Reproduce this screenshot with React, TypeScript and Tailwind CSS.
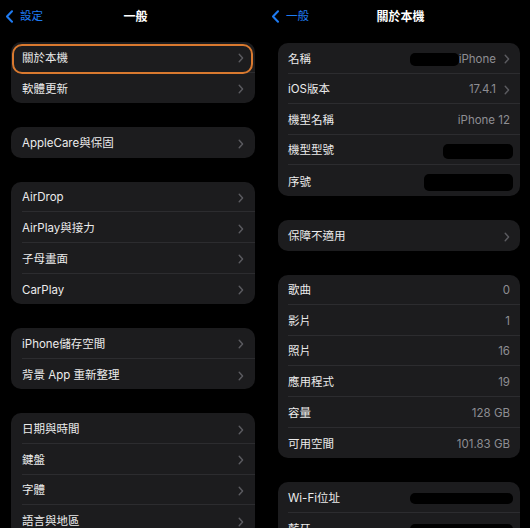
import React from "react";

type Row = {
  label: string;
  value?: string;
  chevron?: boolean;
  bar?: { w: number; h: number };
  ring?: boolean;
};

const font = {
  fontFamily: '"Inter", "Noto Sans CJK TC", "Noto Sans", sans-serif',
};

const Chevron = () => (
  <svg width="6" height="10" viewBox="0 0 6 10" className="shrink-0">
    <path
      d="M1.2 1.2L4.6 5L1.2 8.8"
      stroke="#5b5b60"
      strokeWidth="1.4"
      fill="none"
      strokeLinecap="round"
      strokeLinejoin="round"
    />
  </svg>
);

const BackChevron = () => (
  <svg width="9" height="13" viewBox="0 0 9 13" className="shrink-0">
    <path
      d="M7 1.2L2 6.5L7 11.8"
      stroke="#1f7bf2"
      strokeWidth="2"
      fill="none"
      strokeLinecap="round"
      strokeLinejoin="round"
    />
  </svg>
);

const Header = ({ back, title }: { back: string; title: string }) => (
  <div className="flex h-[32px] items-center pt-[1px]">
    <div className="flex flex-1 items-center gap-[6px] pl-[5px]">
      <BackChevron />
      <span className="text-[11.5px] text-[#1f7bf2]">{back}</span>
    </div>
    <span className="text-[12px] font-semibold text-white">{title}</span>
    <div className="flex-1" />
  </div>
);

const Group = ({ rows, right }: { rows: Row[]; right?: boolean }) => (
  <div
    className={`rounded-[10px] bg-[#1c1c1e] ${
      right ? "ml-[12px] mr-[10px]" : "ml-[11px] mr-[11px]"
    }`}
  >
    {rows.map((r, i) => (
      <div
        key={r.label}
        className={`relative h-[30.6px] ${right ? "pl-[10px]" : "pl-[11px]"}`}
      >
        {r.ring && (
          <div className="absolute -bottom-[1px] left-[1px] right-[2px] top-[2px] rounded-[10px] border-2 border-[#d9792f]" />
        )}
        <div
          className={`flex h-full items-center gap-[8px] pt-[3px] ${
            right ? "pr-[10px]" : "pr-[11px]"
          } ${i < rows.length - 1 ? "border-b border-[#2c2c2f]" : ""}`}
        >
          <span className="text-[11.5px] text-[#ebebeb]">{r.label}</span>
          <div className="flex flex-1 items-center justify-end">
            {r.bar && (
              <div
                className={`rounded-[5px] bg-black ${r.value ? "" : "-mr-[3px]"}`}
                style={{ width: r.bar.w, height: r.bar.h }}
              />
            )}
            {r.value && (
              <span className="text-[11.5px] text-[#8e8e93]">{r.value}</span>
            )}
          </div>
          {r.chevron && <Chevron />}
        </div>
      </div>
    ))}
  </div>
);

const leftGroups: Row[][] = [
  [
    { label: "關於本機", chevron: true, ring: true },
    { label: "軟體更新", chevron: true },
  ],
  [{ label: "AppleCare與保固", chevron: true }],
  [
    { label: "AirDrop", chevron: true },
    { label: "AirPlay與接力", chevron: true },
    { label: "子母畫面", chevron: true },
    { label: "CarPlay", chevron: true },
  ],
  [
    { label: "iPhone儲存空間", chevron: true },
    { label: "背景 App 重新整理", chevron: true },
  ],
  [
    { label: "日期與時間", chevron: true },
    { label: "鍵盤", chevron: true },
    { label: "字體", chevron: true },
    { label: "語言與地區", chevron: true },
  ],
];

const rightGroups: Row[][] = [
  [
    { label: "名稱", value: "iPhone", chevron: true, bar: { w: 49, h: 13 } },
    { label: "iOS版本", value: "17.4.1", chevron: true },
    { label: "機型名稱", value: "iPhone 12" },
    { label: "機型型號", bar: { w: 70, h: 15 } },
    { label: "序號", bar: { w: 89, h: 17 } },
  ],
  [{ label: "保障不適用", chevron: true }],
  [
    { label: "歌曲", value: "0" },
    { label: "影片", value: "1" },
    { label: "照片", value: "16" },
    { label: "應用程式", value: "19" },
    { label: "容量", value: "128 GB" },
    { label: "可用空間", value: "101.83 GB" },
  ],
  [
    { label: "Wi-Fi位址", bar: { w: 103, h: 11 } },
    { label: "藍牙", bar: { w: 103, h: 11 } },
  ],
];

export default function App() {
  return (
    <div className="flex h-[528px] w-[530px] overflow-hidden bg-black" style={font}>
      {/* 一般 */}
      <div className="w-[266px] shrink-0">
        <Header back="設定" title="一般" />
        <div className="flex flex-col gap-[24px] pt-[10px]">
          {leftGroups.map((g, i) => (
            <Group key={i} rows={g} />
          ))}
        </div>
      </div>
      {/* 關於本機 */}
      <div className="w-[264px] shrink-0">
        <Header back="一般" title="關於本機" />
        <div className="flex flex-col gap-[24px] pt-[11px]">
          {rightGroups.map((g, i) => (
            <Group key={i} rows={g} right />
          ))}
        </div>
      </div>
    </div>
  );
}
